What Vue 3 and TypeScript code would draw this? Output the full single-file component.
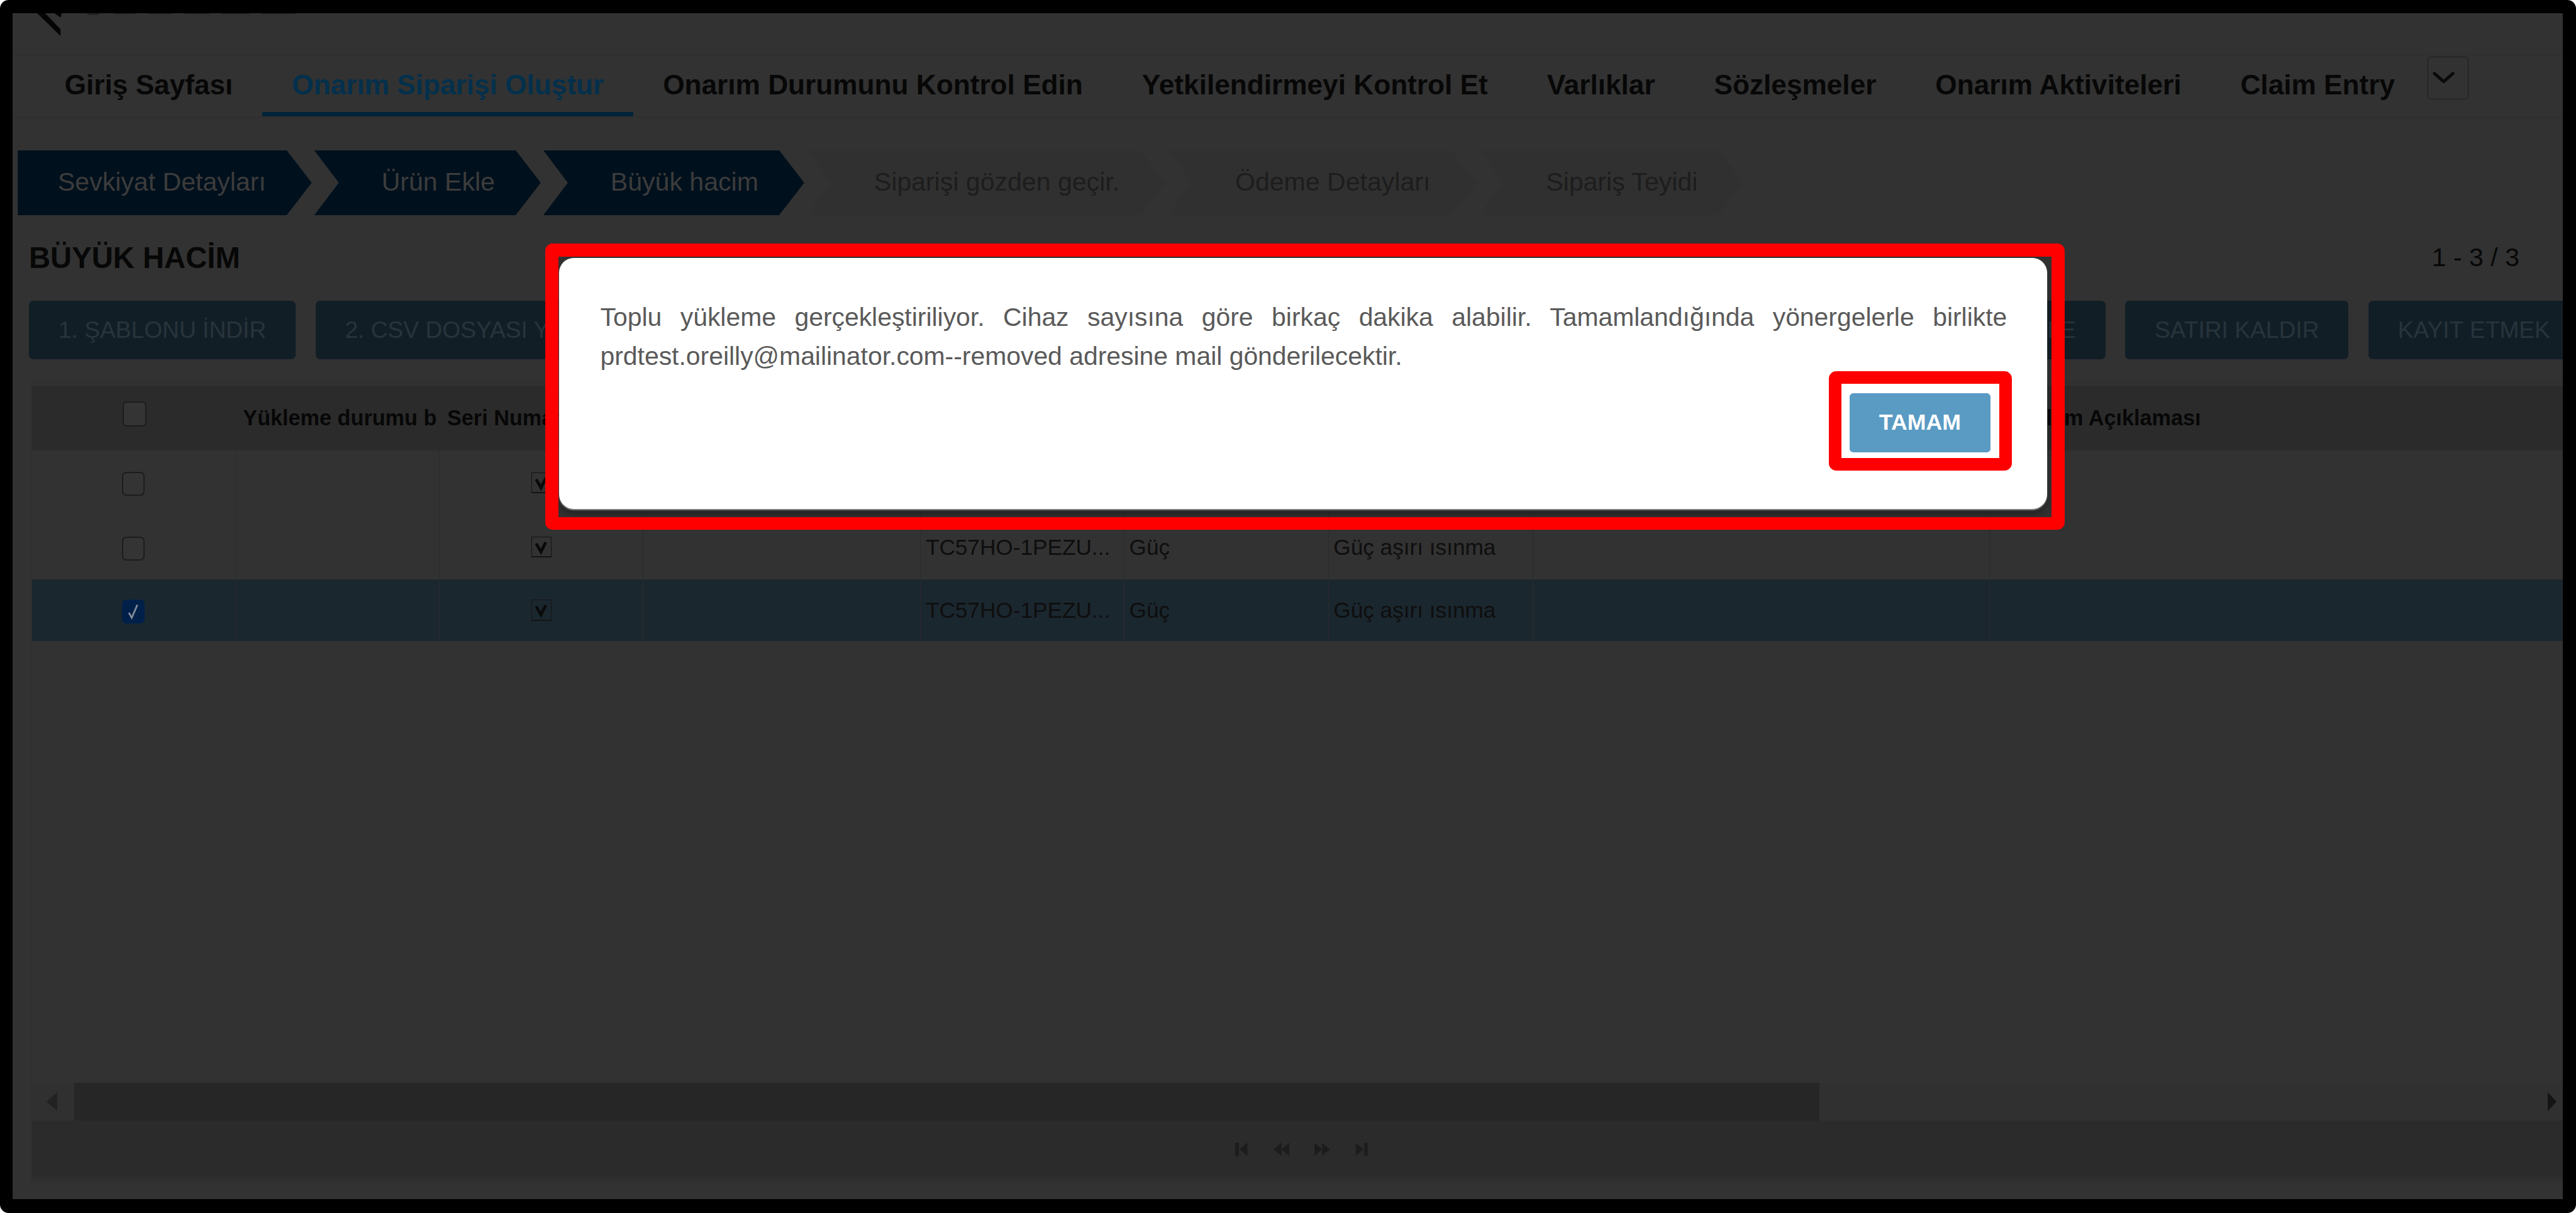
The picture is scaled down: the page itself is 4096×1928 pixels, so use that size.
<script setup lang="ts">
const navItems = [
  { label: 'Giriş Sayfası' },
  { label: 'Onarım Siparişi Oluştur', active: true },
  { label: 'Onarım Durumunu Kontrol Edin' },
  { label: 'Yetkilendirmeyi Kontrol Et' },
  { label: 'Varlıklar' },
  { label: 'Sözleşmeler' },
  { label: 'Onarım Aktiviteleri' },
  { label: 'Claim Entry' },
]
const steps = [
  { label: 'Sevkiyat Detayları', done: true },
  { label: 'Ürün Ekle', done: true },
  { label: 'Büyük hacim', done: true },
  { label: 'Siparişi gözden geçir.', done: false },
  { label: 'Ödeme Detayları', done: false },
  { label: 'Sipariş Teyidi', done: false },
]
const headers = ['', 'Yükleme durumu b', 'Seri Numarası', '', 'Ürün Modeli', 'Kategori', 'Problem', '', 'Problem Açıklaması']
const rows = [
  { selected: false },
  { selected: false },
  { selected: true },
]
</script>

<template>
  <div class="root">
    <div class="frame">
      <header class="brand">
        <svg class="logo" viewBox="0 0 460 37" width="460" height="37">
          <path d="M0 0H13L38 26V37Z" fill="#050505" />
          <path d="M28 0H40L38 7Z" fill="#050505" />
          <path d="M80 0H102L98 3H84ZM125 0H160V1.5H125ZM180 0H220V1.5H180ZM240 0H280V1.5H240ZM300 0H345V1.5H300ZM365 0H420V1.5H365Z" fill="#222" />
        </svg>
      </header>

      <nav class="nav">
        <a v-for="n in navItems" :key="n.label" class="nav-item" :class="{ active: n.active }">{{ n.label }}</a>
        <span class="more">
          <svg viewBox="0 0 36 20" width="36" height="20"><path d="M3 3L18 16L33 3" fill="none" stroke="#0a0a0a" stroke-width="5" stroke-linecap="round" stroke-linejoin="round" /></svg>
        </span>
      </nav>

      <div class="steps">
        <div v-for="(s, i) in steps" :key="s.label" class="step" :class="{ done: s.done, first: i === 0 }">{{ s.label }}</div>
      </div>

      <div class="title-row">
        <h1>BÜYÜK HACİM</h1>
        <span class="count">1 - 3 / 3</span>
      </div>

      <div class="toolbar">
        <button class="btn">1. ŞABLONU İNDİR</button>
        <button class="btn">2. CSV DOSYASI YÜKLE</button>
        <button class="btn push">SATIR EKLE</button>
        <button class="btn">SATIRI KALDIR</button>
        <button class="btn">KAYIT ETMEK</button>
      </div>

      <section class="table">
        <div class="tr head">
          <div class="td center"><span class="cb big"></span></div>
          <div v-for="(h, i) in headers.slice(1)" :key="i" class="td">{{ h }}</div>
        </div>
        <div v-for="(r, i) in rows" :key="i" class="tr" :class="{ selected: r.selected }">
          <div class="td center">
            <span class="cb" :class="{ on: r.selected }">
              <svg v-if="r.selected" viewBox="0 0 36 36" width="33" height="35"><path d="M10 20L15 29L25 6" fill="none" stroke="#858d96" stroke-width="3" /></svg>
            </span>
          </div>
          <div class="td"></div>
          <div class="td center">
            <span class="mini">
              <svg viewBox="0 0 30 30" width="29" height="30"><path d="M7 10L15 24L23 8" fill="none" stroke="#0a0a0a" stroke-width="5" /></svg>
            </span>
          </div>
          <div class="td"></div>
          <div class="td">TC57HO-1PEZU...</div>
          <div class="td">Güç</div>
          <div class="td">Güç aşırı ısınma</div>
          <div class="td"></div>
          <div class="td"></div>
        </div>

        <div class="spacer"></div>

        <div class="scrollbar">
          <span class="arrow left"></span>
          <span class="thumb"></span>
          <span class="arrow right"></span>
        </div>

        <footer class="pager">
          <svg viewBox="0 0 22 22" width="22" height="22"><path d="M1 0H7V22H1ZM21 0V22L8 11Z" /></svg>
          <svg viewBox="0 0 26 22" width="26" height="22"><path d="M13 0V22L0 11ZM26 0V22L13 11Z" /></svg>
          <svg viewBox="0 0 26 22" width="25" height="22"><path d="M0 0V22L13 11ZM13 0V22L26 11Z" /></svg>
          <svg viewBox="0 0 22 22" width="21" height="22"><path d="M1 0V22L14 11ZM15 0H21V22H15Z" /></svg>
        </footer>
      </section>

      <div class="modal" role="dialog">
        <p>Toplu yükleme gerçekleştiriliyor. Cihaz sayısına göre birkaç dakika alabilir. Tamamlandığında yönergelerle birlikte prdtest.oreilly@mailinator.com--removed adresine mail gönderilecektir.</p>
        <button class="ok">TAMAM</button>
      </div>
      <div class="mark mark-modal"></div>
      <div class="mark mark-ok"></div>
    </div>
  </div>
</template>

<style>
html, body { margin: 0; background: #fff; overflow: hidden; }
</style>

<style scoped>
.root {
  zoom: 0.97803;
  width: 4188px;
  height: 1971px;
  box-sizing: border-box;
  background: #000;
  border-radius: 14px;
  padding: 21px 21px 22px 20px;
  font-family: "Liberation Sans", Arial, sans-serif;
  color: #070707;
}
.frame {
  position: relative;
  height: 100%;
  background: #323232;
  overflow: hidden;
  display: flex;
  flex-direction: column;
}
.brand {
  flex: none;
  height: 69px;
  box-sizing: border-box;
  border-bottom: 2px solid #2c2c2c;
  padding-left: 40px;
  overflow: hidden;
}
.logo { display: block; }
.nav {
  flex: none;
  height: 101px;
  box-sizing: border-box;
  border-bottom: 2px solid #2c2c2c;
  padding-left: 37px;
  display: flex;
  align-items: stretch;
}
.nav-item {
  padding: 0 48px;
  font-size: 45.2px;
  font-weight: 700;
  line-height: 96px;
  white-space: nowrap;
  border-bottom: 8px solid transparent;
  height: 99px;
  box-sizing: border-box;
}
.nav-item.active {
  color: #03304c;
  border-bottom-color: #00233a;
}
.more {
  width: 67px;
  height: 70px;
  margin: 2px 0 0 5px;
  box-sizing: border-box;
  border: 2px solid #1a1a1a;
  border-radius: 5px;
  display: flex;
  justify-content: flex-start;
  padding: 24px 0 0 7px;
}
.more svg { display: block; }
.steps {
  flex: none;
  margin-top: 53px;
  padding-left: 9px;
  display: flex;
  gap: 4px;
  height: 106px;
}
.step {
  height: 106px;
  line-height: 104px;
  padding: 0 74.5px 0 109.5px;
  font-size: 42px;
  white-space: nowrap;
  background: #303030;
  color: #1d1d1d;
  clip-path: polygon(0 0, calc(100% - 41px) 0, 100% 50%, calc(100% - 41px) 100%, 0 100%, 40px 50%);
}
.step.done {
  background: #00101c;
  color: #3c3c3c;
}
.step.first {
  padding-left: 65px;
  clip-path: polygon(0 0, calc(100% - 41px) 0, 100% 50%, calc(100% - 41px) 100%, 0 100%);
}
.title-row {
  flex: none;
  margin-top: 44px;
  height: 50px;
  padding: 0 71px 0 27px;
  display: flex;
  justify-content: space-between;
  align-items: center;
}
h1 {
  margin: 0;
  font-size: 48.3px;
  font-weight: 700;
}
.count {
  font-size: 42px;
}
.toolbar {
  flex: none;
  width: 4174px;
  margin-top: 45px;
  box-sizing: border-box;
  padding-left: 27px;
  display: flex;
  gap: 32px;
  height: 95px;
}
.btn {
  font: inherit;
  font-size: 38px;
  height: 95px;
  padding: 0 48px;
  border: 0;
  border-radius: 7px;
  background: #121e26;
  color: #27343c;
  white-space: nowrap;
}
.btn.push { margin-left: auto; }
.table {
  flex: 1;
  margin: 37px 0 24px 31px;
  border: 2px solid #2c2c2c;
  border-right: 0;
  border-bottom: 0;
  display: flex;
  flex-direction: column;
  min-height: 0;
}
.tr {
  flex: none;
  display: grid;
  grid-template-columns: 331px 332px 331px 451px 331px 332px 333px 742px 1200px;
  height: 105px;
  font-size: 36px;
  color: #0e0e0e;
}
.tr.head {
  height: 110px;
  background: #2b2b2b;
  font-size: 35px;
  font-weight: 700;
  color: #070707;
  border-top: 6px solid #323232;
  box-sizing: border-box;
}
.tr.selected {
  height: 100px;
  background: #1b272f;
}
.td {
  border-right: 2px solid #2b2b2b;
  box-sizing: border-box;
  padding: 0 8px;
  display: flex;
  align-items: center;
  white-space: nowrap;
  overflow: hidden;
}
.head .td { padding-left: 12px; }
.center { justify-content: center; }
.cb {
  display: block;
  box-sizing: border-box;
  width: 37px;
  height: 39px;
  margin-top: 4px;
  border: 3px solid #1c1c1c;
  border-radius: 7px;
  background: #343434;
}
.cb.big { width: 39px; height: 41px; margin-top: -14px; }
.cb.on {
  background: #00204a;
  border-color: #00204a;
}
.cb svg, .mini svg { display: block; }
.mini {
  display: block;
  box-sizing: border-box;
  width: 33px;
  height: 34px;
  border: 2px solid #141414;
  border-bottom-width: 3px;
}
.spacer { flex: 1; }
.scrollbar {
  flex: none;
  height: 61px;
  background: #303030;
  position: relative;
  display: flex;
  align-items: center;
  padding-left: 69px;
}
.thumb {
  width: 2837px;
  height: 61px;
  background: #262626;
}
.arrow {
  position: absolute;
  top: 15px;
  width: 0;
  height: 0;
  border-top: 16px solid transparent;
  border-bottom: 16px solid transparent;
}
.arrow.left { left: 24px; border-right: 18px solid #222; }
.arrow.right { right: 11px; border-left: 15px solid #141414; }
.pager {
  flex: none;
  height: 104px;
  background: linear-gradient(#2b2b2b 0 84%, #323232);
  box-sizing: border-box;
  padding: 36px 0 0 1955px;
  display: flex;
  gap: 41px;
  align-items: flex-start;
}
.pager svg { fill: #1c1c1c; display: block; }
.modal {
  position: absolute;
  left: 889px;
  top: 398px;
  width: 2419px;
  height: 408px;
  box-sizing: border-box;
  background: #fff;
  border-radius: 24px;
  box-shadow: 0 2px 2px #8a8a8a, 0 8px 14px rgba(0, 0, 0, .35);
  padding: 66px 65px 0 67px;
}
.modal p {
  margin: 0;
  font-size: 41.8px;
  line-height: 63px;
  text-align: justify;
  color: #5a5a5a;
}
.ok {
  position: absolute;
  left: 2098px;
  top: 220px;
  width: 229px;
  height: 96px;
  border: 0;
  border-radius: 6px;
  background: #5a9bc4;
  color: #fff;
  font: inherit;
  font-size: 36.5px;
  font-weight: 700;
}
.mark {
  position: absolute;
  box-sizing: border-box;
  border: 21px solid #f00;
  border-radius: 12px;
  pointer-events: none;
}
.mark-modal {
  left: 866px;
  top: 375px;
  width: 2471px;
  height: 465px;
  border-width: 22px 22px 21px 22px;
}
.mark-ok {
  left: 2953px;
  top: 582px;
  width: 298px;
  height: 162px;
}
</style>
